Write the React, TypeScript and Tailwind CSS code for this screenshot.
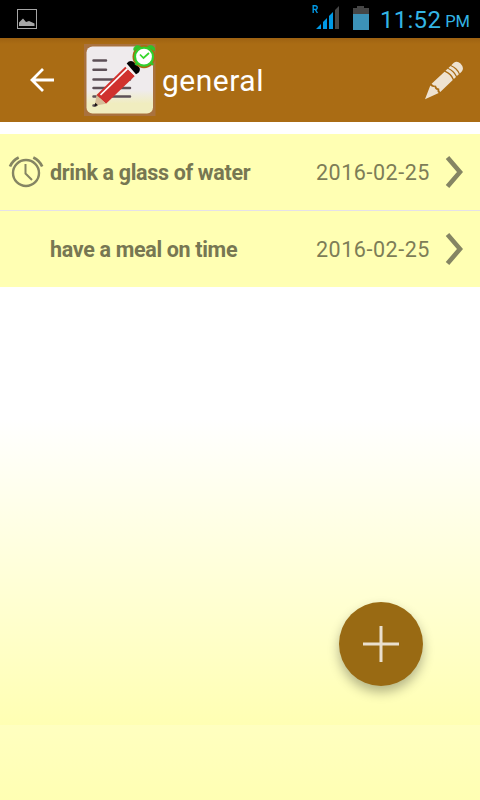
const tasks = [
  { id: 1, title: "drink a glass of water", date: "2016-02-25", alarm: true },
  { id: 2, title: "have a meal on time", date: "2016-02-25", alarm: false },
];

function StatusBar() {
  return (
    <div className="flex h-[38px] items-center bg-black pr-[10px] pl-[17px] text-[#33b5e5]">
      <svg width="20" height="20" viewBox="0 0 20 20">
        <rect x="0.5" y="0.5" width="19" height="19" fill="none" stroke="#a6a6a6" />
        <path d="M2 17V13.500L6 9.500L9 13L12 12L17.500 14.500V17Z" fill="#a6a6a6" />
      </svg>
      <svg className="-mt-[2px] ml-auto" width="28" height="26" viewBox="0 -1 28 26">
        <path
          d="M1.200 7V-0.300H3.200Q5.200 -0.300 5.200 1.600T3.200 3.400H1.200M3.200 3.400L5.400 7"
          fill="none"
          stroke="#0099e5"
          strokeWidth="1.400"
        />
        <path d="M4 23L9 18V23ZM11 23V16L15 12V23ZM17 23V10L21 6V23Z" fill="#0099e5" />
        <path d="M23 23V4L27 0V23Z" fill="#464646" />
      </svg>
      <svg className="-mt-[2px] ml-[13px]" width="16" height="24" viewBox="0 0 16 24">
        <path d="M0 2H4V0H11V2H16V8H0Z" fill="#464646" />
        <path d="M0 8H16V24H0Z" fill="#3c92b8" />
      </svg>
      <span className="ml-[11px] pt-[2px] text-[24px] leading-none tracking-[0.3px]">11:52</span>
      <span className="ml-[4px] pt-[7px] text-[16.500px] leading-none">PM</span>
    </div>
  );
}

function AppLogo() {
  return (
    <svg width="72" height="74" viewBox="84 43 72 74">
      <defs>
        <linearGradient id="paper" x1="0" y1="0" x2="0" y2="1">
          <stop offset="0.65" stopColor="#efebed" />
          <stop offset="0.85" stopColor="#f0edbf" />
        </linearGradient>
      </defs>
      <rect x="84" y="44" width="71.500" height="72" fill="#a9723f" />
      <rect x="86.500" y="46.500" width="66.500" height="67" rx="6" fill="url(#paper)" />
      <path
        d="M93.500 60.500H106M93.500 69.700H106M93.500 79.400H130M93.500 88H130M93.500 96.400H130M93.500 105.500H95.500"
        fill="none"
        stroke="#5d5057"
        strokeWidth="2.500"
        strokeLinecap="round"
      />
      <path d="M96.500 95L125.500 66.500L134.800 76L106 103.800Z" fill="#d0312d" />
      <path d="M100.500 95L127.500 68.700" stroke="#fff" strokeWidth="1.700" />
      <path d="M125 66.500L127 64.500L136.800 74L134.800 76Z" fill="#f4eeee" />
      <path d="M126.700 63.500Q129.500 60 133 61.500L139 67Q141 69.500 138.500 72.800L136 74.300Z" fill="#000" />
      <path d="M96.500 95L106 103.800L96 105.500L95 104Z" fill="#d6bd98" />
      <path d="M95.300 102.800L98 105.300L94.300 106.500Z" fill="#171112" />
      <circle cx="144" cy="56.700" r="11.500" fill="#a86a14" />
      <path
        d="M134 50.500C133 46 137.500 44.500 140.500 46.700ZM147.500 46.700C150.500 44.500 155.500 46 154.500 50.500Z"
        fill="#30c52b"
        stroke="#30c52b"
      />
      <path d="M137.500 62.500L135.500 65M151 62.500L153 65" stroke="#30c52b" strokeWidth="2.500" />
      <circle cx="144" cy="56.700" r="9" fill="#fff" stroke="#30cf2d" strokeWidth="2.200" />
      <path d="M140 54.500L143.500 58L149 53" fill="none" stroke="#35d72d" strokeWidth="1.700" />
    </svg>
  );
}

function PencilIcon() {
  return (
    <svg width="40" height="40" viewBox="424 60 40 40" fill="#eee2d0">
      <path d="M425 99.300L430.300 85.500Q432 87.500 434.500 86.800Q435 89.800 437.500 90Q437 91.800 438.700 93Z" />
      <path d="M431.600 83.800L444.500 71.700Q450.500 74 452.800 80L440.300 92Q439 91 439.200 88.600Q436.500 88.700 436 85.600Q433.300 86 431.600 83.800Z" />
      <path d="M445.500 70.700L447.600 68.700Q453.700 71.500 456 77L453.900 79Q451.500 73 445.500 70.700Z" />
      <path d="M448.400 67.900L450.500 65.900Q456.600 68.800 458.900 74.200L456.900 76.100Q454.400 70.200 448.400 67.900Z" />
      <path d="M451.300 65.200L453.500 63Q457 60.300 460.500 63.400Q464.500 67.500 462 71.300L459.800 73.400Q457.300 67.500 451.300 65.200Z" />
    </svg>
  );
}

function AlarmIcon() {
  return (
    <svg width="36" height="34" viewBox="8 155.500 36 34" fill="none" stroke="#858563">
      <circle cx="26" cy="173.500" r="13" strokeWidth="2.400" />
      <path d="M25.500 164.500V174L32 180.500" strokeWidth="2" />
      <path d="M10 167Q12.500 161 18.700 158M33.300 158Q39.500 161 42.200 167" strokeWidth="2.700" />
    </svg>
  );
}

export default function App() {
  return (
    <div className="flex h-[800px] w-[480px] flex-col overflow-hidden bg-[linear-gradient(to_bottom,#fff_420px,#ffffb3_725px,#ffffc0_725px,#ffffb3_800px)] font-['Roboto','Liberation_Sans',sans-serif]">
      <StatusBar />

      {/* Header */}
      <header className="flex h-[84px] items-center bg-linear-to-b from-[#9e6211] to-[#aa6c14] to-[6px] pr-4 pl-[30px]">
        <svg width="25" height="24" viewBox="0 0 25 24" fill="none" stroke="#fff" strokeWidth="2.800">
          <path d="M24 12H2M13 1L2 12L13 23" />
        </svg>
        <div className="ml-[29px]">
          <AppLogo />
        </div>
        <h1 className="ml-[6px] pt-px text-[30px] leading-none tracking-[0.5px] text-white">general</h1>
        <div className="ml-auto">
          <PencilIcon />
        </div>
      </header>

      {/* Task list */}
      <main className="pt-3">
        <ul className="divide-y divide-[#e5e1e9]">
          {tasks.map((task) => (
            <li key={task.id} className="box-content flex h-[76px] items-center bg-[#ffffb3] pr-[17px] pl-2 text-[#7d7d57]">
              <div className="w-[42px]">{task.alarm && <AlarmIcon />}</div>
              <span className="pt-[2px] text-[21.500px] font-bold tracking-[-0.33px] text-[#777752]">{task.title}</span>
              <span className="ml-auto pt-[2px] text-[21.500px] tracking-[0.55px]">{task.date}</span>
              <svg className="ml-[15px]" width="18" height="34" viewBox="0 0 18 34" fill="none" stroke="#858563" strokeWidth="4.600">
                <path d="M2.500 2.500L15 17L2.500 31.500" />
              </svg>
            </li>
          ))}
        </ul>
      </main>

      <div className="mt-auto mr-[57px] mb-[114px] flex justify-end">
        <button
          aria-label="Add"
          className="flex size-[84px] items-center justify-center rounded-full bg-[#996a13] shadow-[0_6px_12px_rgba(0,0,0,0.3)]"
        >
          <svg width="36" height="36" viewBox="0 0 36 36" stroke="#eadfcd" strokeWidth="3">
            <path d="M0 18H36M18 0V36" />
          </svg>
        </button>
      </div>
    </div>
  );
}
